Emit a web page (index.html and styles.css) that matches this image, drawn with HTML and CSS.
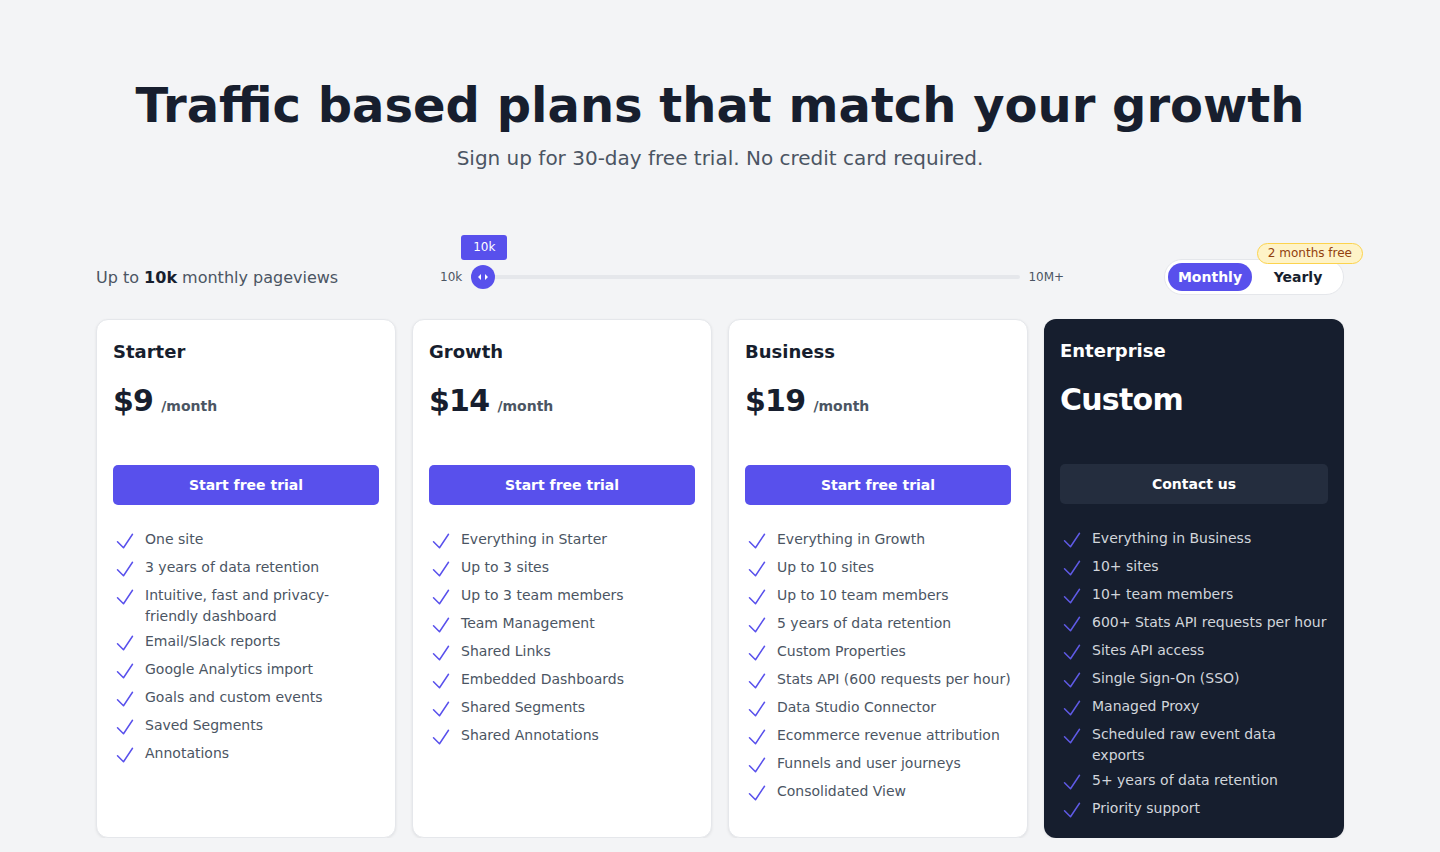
FILE: index.html
```html
<!DOCTYPE html>
<html lang="en">
<head>
    <meta charset="UTF-8">
    <meta name="viewport" content="width=device-width, initial-scale=1.0">
    <title>Pricing</title>
    <link rel="stylesheet" href="styles.css">
</head>
<body>
    <div class="page">
        <header class="hero">
            <h1>Traffic based plans that match your growth</h1>
            <p>Sign up for 30-day free trial. No credit card required.</p>
        </header>

        <div class="pricing-bar">
            <div class="pageviews">Up to <strong>10k</strong> monthly pageviews</div>

            <div class="range">
                <span class="range-label">10k</span>
                <div class="range-track">
                    <div class="range-thumb">
                        <span class="range-tip">10k</span>
                        <svg width="12" height="8" viewBox="0 0 12 8"><path d="M4 1 L1 4 L4 7 Z M8 1 L11 4 L8 7 Z" fill="#fff"/></svg>
                    </div>
                </div>
                <span class="range-label">10M+</span>
            </div>

            <div class="interval">
                <span class="badge">2 months free</span>
                <button class="interval-btn active">Monthly</button>
                <button class="interval-btn">Yearly</button>
            </div>
        </div>

        <div class="plans">
            <div class="plan">
                <h3>Starter</h3>
                <div class="price"><span class="amount">$9</span><span class="per">/month</span></div>
                <button class="plan-btn">Start free trial</button>
                <ul class="features">
                    <li><svg class="check" viewBox="0 0 24 24"><path d="M4.5 12.75l6 6 9-13.5"/></svg><span>One site</span></li>
                    <li><svg class="check" viewBox="0 0 24 24"><path d="M4.5 12.75l6 6 9-13.5"/></svg><span>3 years of data retention</span></li>
                    <li><svg class="check" viewBox="0 0 24 24"><path d="M4.5 12.75l6 6 9-13.5"/></svg><span>Intuitive, fast and privacy-friendly dashboard</span></li>
                    <li><svg class="check" viewBox="0 0 24 24"><path d="M4.5 12.75l6 6 9-13.5"/></svg><span>Email/Slack reports</span></li>
                    <li><svg class="check" viewBox="0 0 24 24"><path d="M4.5 12.75l6 6 9-13.5"/></svg><span>Google Analytics import</span></li>
                    <li><svg class="check" viewBox="0 0 24 24"><path d="M4.5 12.75l6 6 9-13.5"/></svg><span>Goals and custom events</span></li>
                    <li><svg class="check" viewBox="0 0 24 24"><path d="M4.5 12.75l6 6 9-13.5"/></svg><span>Saved Segments</span></li>
                    <li><svg class="check" viewBox="0 0 24 24"><path d="M4.5 12.75l6 6 9-13.5"/></svg><span>Annotations</span></li>
                </ul>
            </div>

            <div class="plan">
                <h3>Growth</h3>
                <div class="price"><span class="amount">$14</span><span class="per">/month</span></div>
                <button class="plan-btn">Start free trial</button>
                <ul class="features">
                    <li><svg class="check" viewBox="0 0 24 24"><path d="M4.5 12.75l6 6 9-13.5"/></svg><span>Everything in Starter</span></li>
                    <li><svg class="check" viewBox="0 0 24 24"><path d="M4.5 12.75l6 6 9-13.5"/></svg><span>Up to 3 sites</span></li>
                    <li><svg class="check" viewBox="0 0 24 24"><path d="M4.5 12.75l6 6 9-13.5"/></svg><span>Up to 3 team members</span></li>
                    <li><svg class="check" viewBox="0 0 24 24"><path d="M4.5 12.75l6 6 9-13.5"/></svg><span>Team Management</span></li>
                    <li><svg class="check" viewBox="0 0 24 24"><path d="M4.5 12.75l6 6 9-13.5"/></svg><span>Shared Links</span></li>
                    <li><svg class="check" viewBox="0 0 24 24"><path d="M4.5 12.75l6 6 9-13.5"/></svg><span>Embedded Dashboards</span></li>
                    <li><svg class="check" viewBox="0 0 24 24"><path d="M4.5 12.75l6 6 9-13.5"/></svg><span>Shared Segments</span></li>
                    <li><svg class="check" viewBox="0 0 24 24"><path d="M4.5 12.75l6 6 9-13.5"/></svg><span>Shared Annotations</span></li>
                </ul>
            </div>

            <div class="plan">
                <h3>Business</h3>
                <div class="price"><span class="amount">$19</span><span class="per">/month</span></div>
                <button class="plan-btn">Start free trial</button>
                <ul class="features">
                    <li><svg class="check" viewBox="0 0 24 24"><path d="M4.5 12.75l6 6 9-13.5"/></svg><span>Everything in Growth</span></li>
                    <li><svg class="check" viewBox="0 0 24 24"><path d="M4.5 12.75l6 6 9-13.5"/></svg><span>Up to 10 sites</span></li>
                    <li><svg class="check" viewBox="0 0 24 24"><path d="M4.5 12.75l6 6 9-13.5"/></svg><span>Up to 10 team members</span></li>
                    <li><svg class="check" viewBox="0 0 24 24"><path d="M4.5 12.75l6 6 9-13.5"/></svg><span>5 years of data retention</span></li>
                    <li><svg class="check" viewBox="0 0 24 24"><path d="M4.5 12.75l6 6 9-13.5"/></svg><span>Custom Properties</span></li>
                    <li><svg class="check" viewBox="0 0 24 24"><path d="M4.5 12.75l6 6 9-13.5"/></svg><span>Stats API (600 requests per hour)</span></li>
                    <li><svg class="check" viewBox="0 0 24 24"><path d="M4.5 12.75l6 6 9-13.5"/></svg><span>Data Studio Connector</span></li>
                    <li><svg class="check" viewBox="0 0 24 24"><path d="M4.5 12.75l6 6 9-13.5"/></svg><span>Ecommerce revenue attribution</span></li>
                    <li><svg class="check" viewBox="0 0 24 24"><path d="M4.5 12.75l6 6 9-13.5"/></svg><span>Funnels and user journeys</span></li>
                    <li><svg class="check" viewBox="0 0 24 24"><path d="M4.5 12.75l6 6 9-13.5"/></svg><span>Consolidated View</span></li>
                </ul>
            </div>

            <div class="plan plan-dark">
                <h3>Enterprise</h3>
                <div class="price"><span class="amount">Custom</span></div>
                <button class="plan-btn">Contact us</button>
                <ul class="features">
                    <li><svg class="check" viewBox="0 0 24 24"><path d="M4.5 12.75l6 6 9-13.5"/></svg><span>Everything in Business</span></li>
                    <li><svg class="check" viewBox="0 0 24 24"><path d="M4.5 12.75l6 6 9-13.5"/></svg><span>10+ sites</span></li>
                    <li><svg class="check" viewBox="0 0 24 24"><path d="M4.5 12.75l6 6 9-13.5"/></svg><span>10+ team members</span></li>
                    <li><svg class="check" viewBox="0 0 24 24"><path d="M4.5 12.75l6 6 9-13.5"/></svg><span>600+ Stats API requests per hour</span></li>
                    <li><svg class="check" viewBox="0 0 24 24"><path d="M4.5 12.75l6 6 9-13.5"/></svg><span>Sites API access</span></li>
                    <li><svg class="check" viewBox="0 0 24 24"><path d="M4.5 12.75l6 6 9-13.5"/></svg><span>Single Sign-On (SSO)</span></li>
                    <li><svg class="check" viewBox="0 0 24 24"><path d="M4.5 12.75l6 6 9-13.5"/></svg><span>Managed Proxy</span></li>
                    <li><svg class="check" viewBox="0 0 24 24"><path d="M4.5 12.75l6 6 9-13.5"/></svg><span>Scheduled raw event data exports</span></li>
                    <li><svg class="check" viewBox="0 0 24 24"><path d="M4.5 12.75l6 6 9-13.5"/></svg><span>5+ years of data retention</span></li>
                    <li><svg class="check" viewBox="0 0 24 24"><path d="M4.5 12.75l6 6 9-13.5"/></svg><span>Priority support</span></li>
                </ul>
            </div>
        </div>
    </div>
</body>
</html>
```

FILE: styles.css
```css
:root {
    --bg: #f3f4f6;
    --ink: #171e2e;
    --muted: #4b5563;
    --accent: #5850ec;
    --dark: #161e2e;
    --dark-btn: #242d3e;
}

* {
    margin: 0;
    padding: 0;
    box-sizing: border-box;
}

body {
    background: var(--bg);
    color: var(--ink);
    font-family: 'DejaVu Sans', sans-serif;
}

.page {
    max-width: 1248px;
    margin: 0 auto;
}

.hero {
    text-align: center;
    padding-top: 76px;
}

.hero h1 {
    font-size: 48px;
    line-height: 58px;
    font-weight: 700;
}

.hero p {
    margin-top: 10px;
    font-size: 20px;
    line-height: 28px;
    color: var(--muted);
}

/* pageviews slider + billing toggle */
.pricing-bar {
    display: flex;
    align-items: center;
    justify-content: space-between;
    margin-top: 87px;
    height: 36px;
}

.pageviews {
    font-size: 16px;
    color: var(--muted);
}

.pageviews strong {
    color: var(--ink);
}

.range {
    display: flex;
    align-items: center;
    width: 624px;
    margin-left: 2px;
}

.range-label {
    font-size: 12px;
    color: #4b5563;
}

.range-track {
    flex: 1;
    position: relative;
    height: 4px;
    margin: 0 8px 0 9px;
    background: #e5e7eb;
    border-radius: 2px;
}

.range-thumb {
    position: absolute;
    left: 0;
    top: 50%;
    width: 24px;
    height: 24px;
    margin-top: -12px;
    border-radius: 50%;
    background: var(--accent);
    display: flex;
    align-items: center;
    justify-content: center;
}

.range-tip {
    position: absolute;
    bottom: 29px;
    left: 50%;
    transform: translateX(-50%);
    margin-left: 1px;
    width: 46px;
    height: 25px;
    line-height: 25px;
    text-align: center;
    background: var(--accent);
    color: #fff;
    font-size: 12px;
    border-radius: 3px;
}

.interval {
    position: relative;
    display: flex;
    gap: 4px;
    padding: 3px;
    background: #fff;
    border: 1px solid #e5e7eb;
    border-radius: 18px;
}

.interval-btn {
    width: 84px;
    height: 28px;
    border: none;
    border-radius: 14px;
    background: transparent;
    font-family: inherit;
    font-size: 14px;
    font-weight: 700;
    color: var(--ink);
}

.interval-btn.active {
    background: var(--accent);
    color: #fff;
}

.badge {
    position: absolute;
    top: -17px;
    right: -20px;
    padding: 0 10px;
    height: 21px;
    line-height: 19px;
    font-size: 12px;
    color: #92400e;
    background: #fef3c7;
    border: 1px solid #fcd34d;
    border-radius: 11px;
    white-space: nowrap;
}

/* plan cards */
.plans {
    display: grid;
    grid-template-columns: repeat(4, 1fr);
    gap: 16px;
    margin-top: 24px;
}

.plan {
    background: #fff;
    border: 1px solid #e5e7eb;
    border-radius: 12px;
    padding: 18px 14px 16px 16px;
    box-shadow: 0 1px 3px rgba(0, 0, 0, 0.08);
}

.plan h3 {
    font-size: 18px;
    line-height: 28px;
    font-weight: 700;
}

.price {
    display: flex;
    align-items: baseline;
    gap: 8px;
    margin-top: 17px;
    height: 82px;
}

.amount {
    font-size: 30px;
    line-height: 36px;
    font-weight: 700;
    letter-spacing: -0.75px;
}

.per {
    font-size: 14px;
    font-weight: 700;
    color: var(--muted);
}

.plan-btn {
    display: block;
    width: calc(100% - 2px);
    height: 40px;
    border: none;
    border-radius: 5px;
    background: var(--accent);
    color: #fff;
    font-family: inherit;
    font-size: 14px;
    font-weight: 700;
}

.features {
    list-style: none;
    margin-top: 24px;
    display: flex;
    flex-direction: column;
    gap: 4px;
}

.features li {
    display: flex;
    align-items: flex-start;
    gap: 8px;
    font-size: 14px;
    line-height: 21px;
    color: var(--muted);
}

.check {
    flex: none;
    width: 24px;
    height: 24px;
    fill: none;
    stroke: var(--accent);
    stroke-width: 1.5;
    stroke-linecap: round;
    stroke-linejoin: round;
}

.plan-dark {
    background: var(--dark);
    border: none;
    padding: 18px 16px 16px;
    color: #fff;
}

.plan-dark .plan-btn {
    width: 100%;
    background: var(--dark-btn);
}

.plan-dark .features li {
    color: #d1d5db;
}

.plan-dark .check {
    stroke: #5f5ae6;
}
```
